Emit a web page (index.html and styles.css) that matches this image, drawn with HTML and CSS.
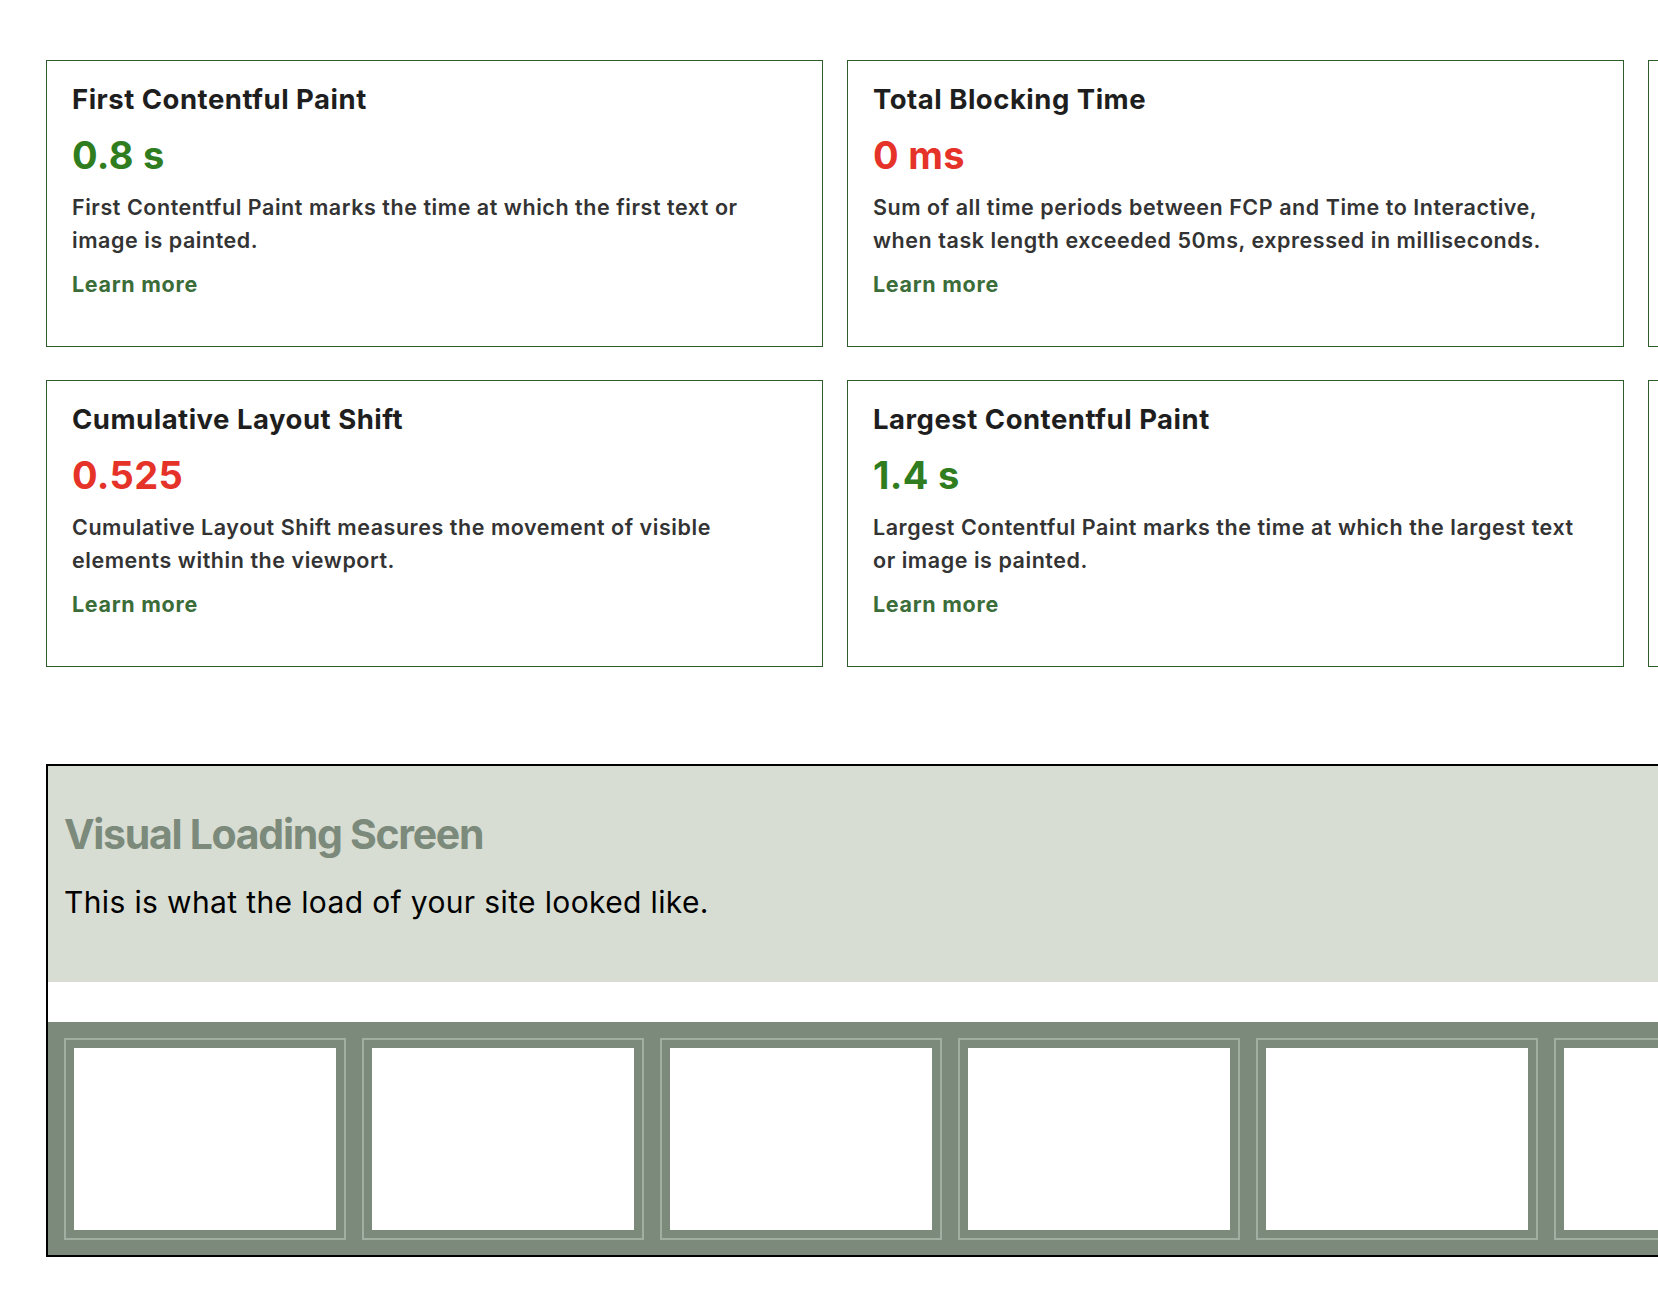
FILE: index.html
```html
<!DOCTYPE html>
<html lang="en">
<head>
<meta charset="utf-8">
<title>Performance metrics</title>
<link rel="stylesheet" href="styles.css">
</head>
<body>
<main class="page">
  <div class="metrics">
    <article class="card">
      <h3 class="card-title">First Contentful Paint</h3>
      <p class="card-value good">0.8 s</p>
      <p class="card-desc">First Contentful Paint marks the time at which the first text or image is painted.</p>
      <a class="learn" href="#">Learn more</a>
    </article>
    <article class="card">
      <h3 class="card-title">Total Blocking Time</h3>
      <p class="card-value bad">0 ms</p>
      <p class="card-desc">Sum of all time periods between FCP and Time to Interactive, when task length exceeded 50ms, expressed in milliseconds.</p>
      <a class="learn" href="#">Learn more</a>
    </article>
    <article class="card">
      <h3 class="card-title">Speed Index</h3>
      <p class="card-value good">1.2 s</p>
      <p class="card-desc">Speed Index shows how quickly the contents of a page are visibly populated.</p>
      <a class="learn" href="#">Learn more</a>
    </article>
    <article class="card">
      <h3 class="card-title">Cumulative Layout Shift</h3>
      <p class="card-value bad">0.525</p>
      <p class="card-desc">Cumulative Layout Shift measures the movement of visible elements within the viewport.</p>
      <a class="learn" href="#">Learn more</a>
    </article>
    <article class="card">
      <h3 class="card-title">Largest Contentful Paint</h3>
      <p class="card-value good">1.4 s</p>
      <p class="card-desc">Largest Contentful Paint marks the time at which the largest text or image is painted.</p>
      <a class="learn" href="#">Learn more</a>
    </article>
    <article class="card">
      <h3 class="card-title">Time to Interactive</h3>
      <p class="card-value good">1.4 s</p>
      <p class="card-desc">Time to Interactive is the amount of time it takes for the page to become fully interactive.</p>
      <a class="learn" href="#">Learn more</a>
    </article>
  </div>

  <section class="visual">
    <header class="visual-head">
      <h2 class="visual-title">Visual Loading Screen</h2>
      <p class="visual-sub">This is what the load of your site looked like.</p>
    </header>
    <div class="visual-gap"></div>
    <div class="filmstrip">
      <div class="frame"><div class="shot"></div></div>
      <div class="frame"><div class="shot"></div></div>
      <div class="frame"><div class="shot"></div></div>
      <div class="frame"><div class="shot"></div></div>
      <div class="frame"><div class="shot"></div></div>
      <div class="frame"><div class="shot"></div></div>
      <div class="frame"><div class="shot"></div></div>
      <div class="frame"><div class="shot"></div></div>
    </div>
  </section>
</main>
</body>
</html>
```

FILE: styles.css
```css
html, body {
  margin: 0;
  padding: 0;
  overflow: hidden;
  background: #ffffff;
}

body {
  font-family: Inter, "Noto Sans", "Liberation Sans", sans-serif;
  color: #1e1e1e;
}

.page {
  width: 2379px;
  padding: 60px 0 0 46px;
}

.metrics {
  display: grid;
  grid-template-columns: repeat(3, 777px);
  column-gap: 24px;
  row-gap: 33px;
}

.card {
  box-sizing: border-box;
  height: 287px;
  border: 1px solid #2e5d2b;
  padding: 22px 24px 0 25px;
}

.card-title {
  margin: 0;
  font-size: 27.5px;
  line-height: 33px;
  font-weight: 700;
  letter-spacing: 0.5px;
  color: #1e1e1e;
}

.card-value {
  margin: 17px 0 0;
  font-size: 38px;
  line-height: 44px;
  font-weight: 700;
  letter-spacing: 0.3px;
}

.good { color: #2f7d1f; }
.bad { color: #e63329; }

.card-desc {
  margin: 14px 0 0;
  max-width: 714px;
  font-size: 21.5px;
  line-height: 33px;
  font-weight: 600;
  letter-spacing: 0.55px;
  color: #333333;
}

.learn {
  display: block;
  margin-top: 11px;
  font-size: 21.5px;
  line-height: 33px;
  font-weight: 700;
  letter-spacing: 0.7px;
  color: #3b6d39;
  text-decoration: none;
}

.visual {
  margin-top: 97px;
  border: 2px solid #000000;
}

.visual-head {
  box-sizing: border-box;
  height: 216px;
  padding: 43px 16px 0;
  background: #d8ddd3;
}

.visual-title {
  margin: 0;
  font-size: 41px;
  line-height: 50px;
  font-weight: 700;
  letter-spacing: -1.3px;
  color: #7b8a7b;
}

.visual-sub {
  margin: 25px 0 0;
  font-size: 30px;
  line-height: 36px;
  font-weight: 400;
  letter-spacing: 0.36px;
  color: #000000;
}

.visual-gap {
  height: 40px;
  background: #ffffff;
}

.filmstrip {
  display: flex;
  gap: 16px;
  padding: 16px 16px 15px;
  background: #7b8a7b;
}

.frame {
  flex: none;
  border: 2px solid #a2aea1;
  padding: 8px;
}

.shot {
  width: 262px;
  height: 182px;
  background: #ffffff;
}
```
